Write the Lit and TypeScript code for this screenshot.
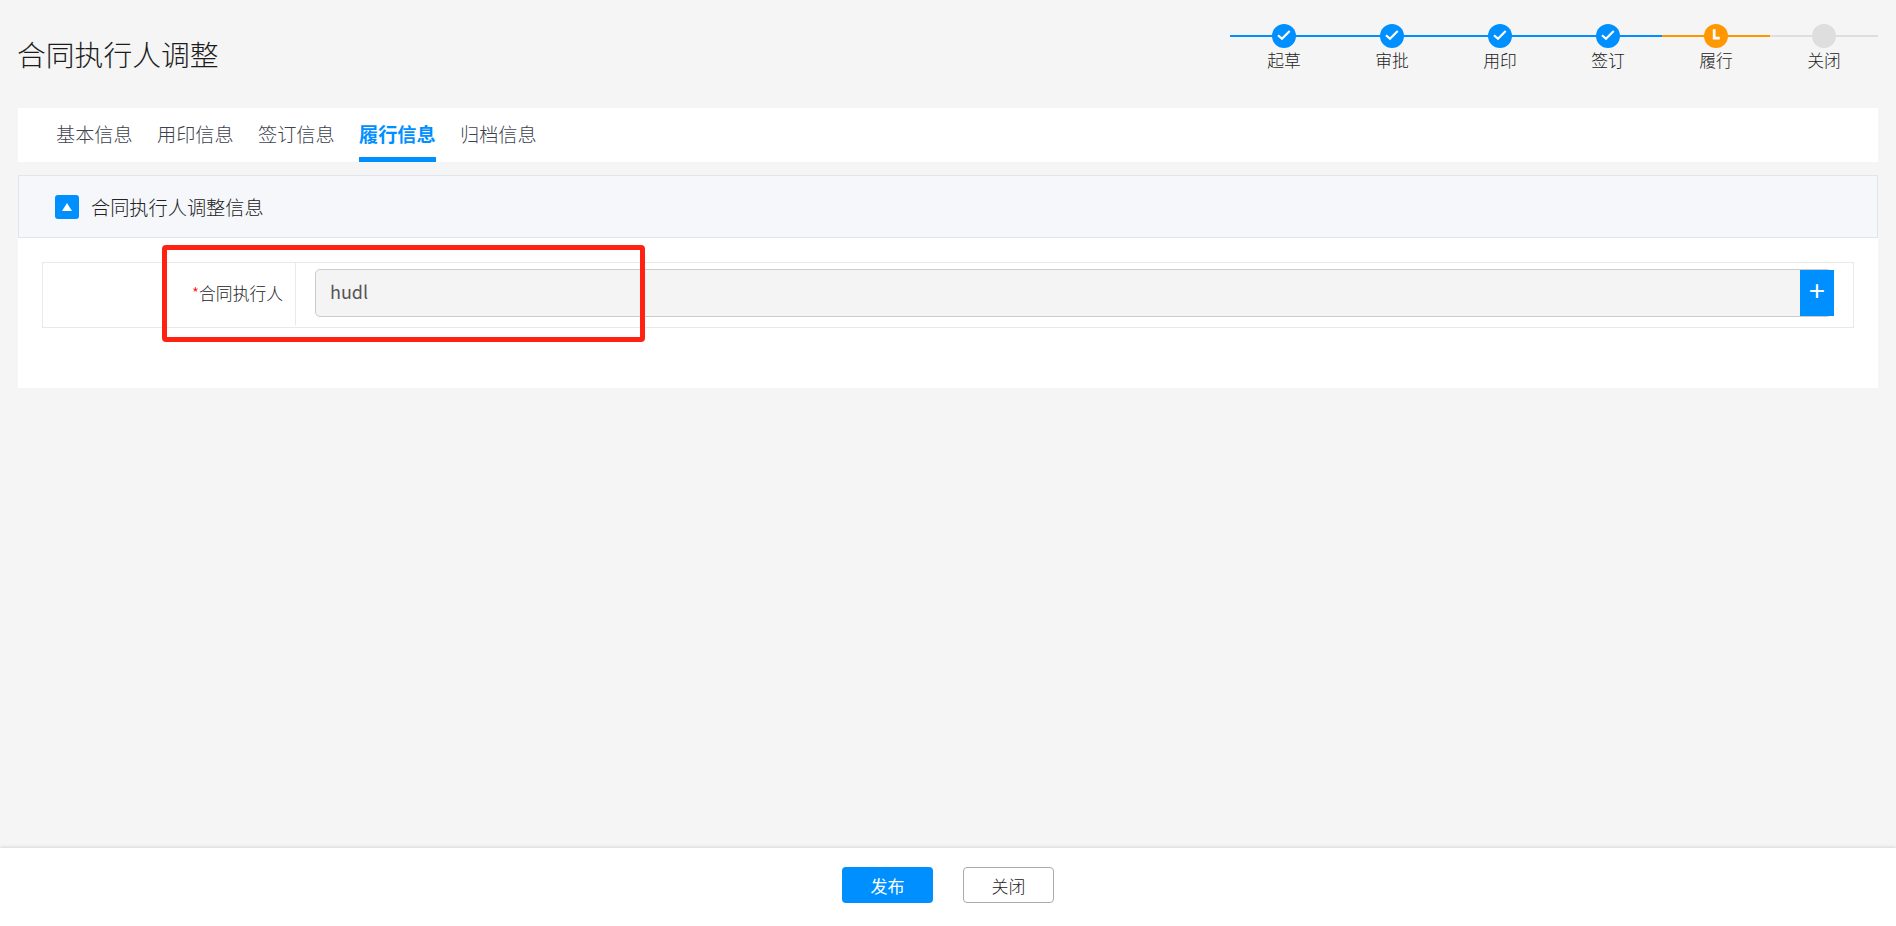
import { LitElement, html, css, svg } from "lit";
import { customElement } from "lit/decorators.js";

const steps = [
  { name: "起草", state: "done" },
  { name: "审批", state: "done" },
  { name: "用印", state: "done" },
  { name: "签订", state: "done" },
  { name: "履行", state: "current" },
  { name: "关闭", state: "todo" },
];
const tabs = ["基本信息", "用印信息", "签订信息", "履行信息", "归档信息"];
const ACTIVE_TAB = 3;

const check = svg`<path d="M6 11.2 L10 14.8 L17.7 7" fill="none" stroke="#fff" stroke-width="2.2"/>`;
const clock = svg`<path d="M10.2 5.3 V14.2 H15.8" fill="none" stroke="#fff" stroke-width="2.8"/>`;

@customElement("app-root")
export class AppRoot extends LitElement {
  static styles = css`
    :host {
      display: flex;
      flex-direction: column;
      height: 100vh;
      overflow: hidden;
      position: relative;
      background: #f5f5f5;
      font-family: "Noto Sans CJK SC", "Noto Sans", sans-serif;
      font-weight: 300;
      color: #222;
    }
    .main {
      flex: 1;
      padding: 0 18px;
      min-height: 0;
    }
    .header {
      height: 108px;
      display: flex;
      justify-content: space-between;
    }
    .title {
      margin: 0 0 0 -1px;
      font-size: 28.8px;
      font-weight: 300;
      line-height: 40px;
      padding-top: 34px;
      color: #1c1c1c;
    }
    .steps {
      display: flex;
      padding-top: 24px;
    }
    .step {
      width: 108px;
      display: flex;
      flex-direction: column;
      align-items: center;
    }
    .dot-row {
      width: 100%;
      height: 24px;
      display: flex;
      justify-content: center;
      background: linear-gradient(var(--c), var(--c)) center / 100% 2px no-repeat;
    }
    .step.done { --c: #008fff; }
    .step.current { --c: #ff9800; }
    .step.todo { --c: #dedede; }
    .dot {
      width: 24px;
      height: 24px;
      border-radius: 50%;
      background: var(--c);
      display: block;
    }
    .step-name {
      font-size: 16.8px;
      line-height: 24px;
      color: #222;
    }
    .tabs {
      height: 54px;
      background: #fff;
      display: flex;
      gap: 24px;
      padding-left: 38px;
      box-sizing: border-box;
    }
    .tab {
      width: 77px;
      white-space: nowrap;
      font-size: 19.2px;
      line-height: 53px;
      height: 54px;
      box-sizing: border-box;
      color: #3c424e;
    }
    .tab.active {
      color: #008fff;
      font-weight: 700;
      border-bottom: 5px solid #008fff;
    }
    .card {
      margin-top: 13px;
      background: #fff;
      height: 213px;
      box-sizing: border-box;
    }
    .section {
      height: 63px;
      box-sizing: border-box;
      background: #f5f7fb;
      border: 1px solid #e1e5ea;
      display: flex;
      align-items: center;
      padding-left: 36px;
      gap: 12px;
    }
    .toggle {
      width: 24px;
      height: 24px;
      border-radius: 3px;
      background: #008fff;
      display: block;
    }
    .section-title {
      font-size: 19.2px;
      color: #222;
    }
    .form {
      margin: 24px 24px 0;
      height: 66px;
      box-sizing: border-box;
      border: 1px solid #e9e9e9;
      display: flex;
    }
    .label {
      width: 253px;
      box-sizing: border-box;
      padding-right: 12px;
      text-align: right;
      font-size: 16.8px;
      line-height: 60px;
      border-right: 1px solid #e9e9e9;
      margin-bottom: 2px;
      color: #222;
    }
    .req { color: #f00; }
    .field {
      flex: 1;
      display: flex;
      padding: 6px 21px 0 19px;
    }
    .input {
      flex: 1;
      height: 48px;
      box-sizing: border-box;
      background: #f4f4f4;
      border: 1px solid #ccc;
      border-radius: 5px;
      display: flex;
      justify-content: space-between;
    }
    .value {
      font-size: 18px;
      font-weight: 400;
      line-height: 42px;
      padding-left: 14px;
      color: #555;
    }
    .add {
      width: 34px;
      height: 46px;
      margin-right: -3px;
      background: #008fff;
      color: #fff;
      border: 0;
      padding: 0 0 4px;
      box-sizing: border-box;
      font: 400 28px/40px "Liberation Sans", sans-serif;
    }
    .footer {
      height: 78px;
      flex: none;
      background: #fff;
      box-shadow: 0 -1px 3px rgba(0, 0, 0, 0.12);
      display: flex;
      justify-content: center;
      gap: 30px;
      padding-top: 19px;
      box-sizing: border-box;
    }
    .btn {
      width: 91px;
      height: 36px;
      box-sizing: border-box;
      border-radius: 4px;
      font-family: inherit;
      font-size: 17px;
      font-weight: 300;
      line-height: 1;
      padding: 0;
    }
    .btn.primary {
      background: #008fff;
      border: 0;
      color: #fff;
      font-weight: 400;
    }
    .btn.plain {
      background: #fff;
      border: 1px solid #aaa;
      color: #222;
    }
    .mark {
      position: absolute;
      left: 162px;
      top: 245px;
      width: 483px;
      height: 97px;
      box-sizing: border-box;
      border: 5px solid #ff2212;
      border-radius: 4px;
      pointer-events: none;
    }
  `;

  render() {
    return html`
      <div class="main">
        <div class="header">
          <h1 class="title">合同执行人调整</h1>
          <div class="steps">
            ${steps.map(
              (s) => html`
                <div class="step ${s.state}">
                  <div class="dot-row">
                    <svg class="dot" viewBox="0 0 24 24">
                      ${s.state === "done" ? check : s.state === "current" ? clock : ""}
                    </svg>
                  </div>
                  <div class="step-name">${s.name}</div>
                </div>
              `
            )}
          </div>
        </div>
        <nav class="tabs">
          ${tabs.map(
            (t, i) => html`<div class="tab ${i === ACTIVE_TAB ? "active" : ""}">${t}</div>`
          )}
        </nav>
        <section class="card">
          <div class="section">
            <svg class="toggle" viewBox="0 0 24 24"><path d="M7 16 H17 L12 8 Z" fill="#fff" /></svg>
            <span class="section-title">合同执行人调整信息</span>
          </div>
          <div class="form">
            <div class="label"><span class="req">*</span>合同执行人</div>
            <div class="field">
              <div class="input">
                <span class="value">hudl</span>
                <button class="add">+</button>
              </div>
            </div>
          </div>
        </section>
      </div>
      <footer class="footer">
        <button class="btn primary">发布</button>
        <button class="btn plain">关闭</button>
      </footer>
      <div class="mark"></div>
    `;
  }
}
